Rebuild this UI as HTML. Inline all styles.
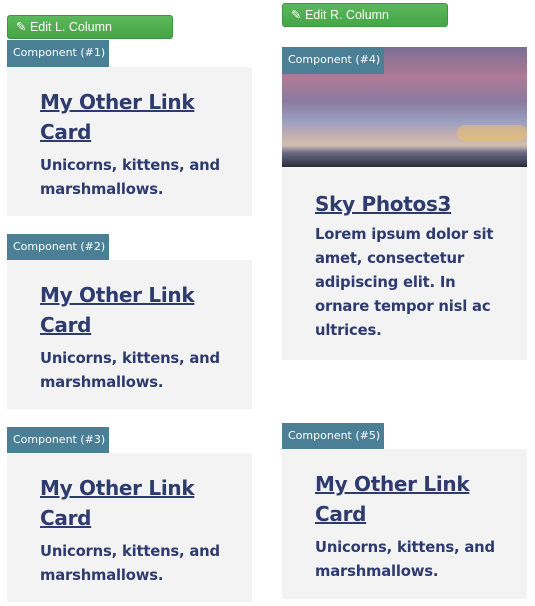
<html><head><style>
body{margin:0;width:535px;height:606px;background:#fff;font-family:"Liberation Sans",sans-serif;position:relative;overflow:hidden}
.btn{position:absolute;height:24px;background:linear-gradient(#5cb85c,#46a546);border:1px solid #3e963e;border-radius:3px;color:#fff;font-size:12.5px;line-height:22px;box-sizing:border-box;padding-left:8px}
.lab{position:absolute;background:#4a7f96;color:#fff;line-height:26px;padding-left:6px;box-sizing:border-box;height:27px;width:102px;font-family:"DejaVu Sans","Liberation Sans",sans-serif;font-size:11px}
.card{position:absolute;background:#f3f3f4;box-sizing:border-box;padding:20px 20px 0 33px;color:#2e3b6f;font-family:"DejaVu Sans","Liberation Sans",sans-serif;font-weight:bold}
.card a{display:block;color:#2e3b6f;text-decoration:underline;font-size:20px;line-height:30px;margin-bottom:7px;letter-spacing:-0.3px}
.card p{margin:0;font-size:14.8px;line-height:24px;letter-spacing:-0.2px}
</style></head><body>
<div class="btn" style="left:7px;top:15px;width:166px">✎ Edit L. Column</div>
<div class="lab" style="left:7px;top:40px">Component (#1)</div>
<div class="card" style="left:7px;top:67px;width:245px;height:149px"><a>My Other Link Card</a><p>Unicorns, kittens, and marshmallows.</p></div>
<div class="lab" style="left:7px;top:234px">Component (#2)</div>
<div class="card" style="left:7px;top:260px;width:245px;height:149px"><a>My Other Link Card</a><p>Unicorns, kittens, and marshmallows.</p></div>
<div class="lab" style="left:7px;top:427px">Component (#3)</div>
<div class="card" style="left:7px;top:453px;width:245px;height:149px"><a>My Other Link Card</a><p>Unicorns, kittens, and marshmallows.</p></div>

<div class="btn" style="left:282px;top:3px;width:166px">✎ Edit R. Column</div>
<div style="position:absolute;left:282px;top:47px;width:245px;height:120px;background:linear-gradient(180deg,#7a6f95 0%,#b07a95 25%,#8a7aa0 45%,#9aa0c0 62%,#c8b0b0 75%,#d0c0b0 82%,#6a6a88 88%,#2a2a3a 100%)">
<div style="position:absolute;right:0;top:78px;width:70px;height:16px;background:#e8c070;opacity:.6;border-radius:8px"></div></div>
<div class="lab" style="left:282px;top:47px">Component (#4)</div>
<div class="card" style="left:282px;top:167px;width:245px;height:193px;padding-top:22px"><a style="margin-bottom:4px">Sky Photos3</a><p>Lorem ipsum dolor sit amet, consectetur adipiscing elit. In ornare tempor nisl ac ultrices.</p></div>
<div class="lab" style="left:282px;top:423px">Component (#5)</div>
<div class="card" style="left:282px;top:449px;width:245px;height:150px"><a>My Other Link Card</a><p>Unicorns, kittens, and marshmallows.</p></div>
</body></html>
